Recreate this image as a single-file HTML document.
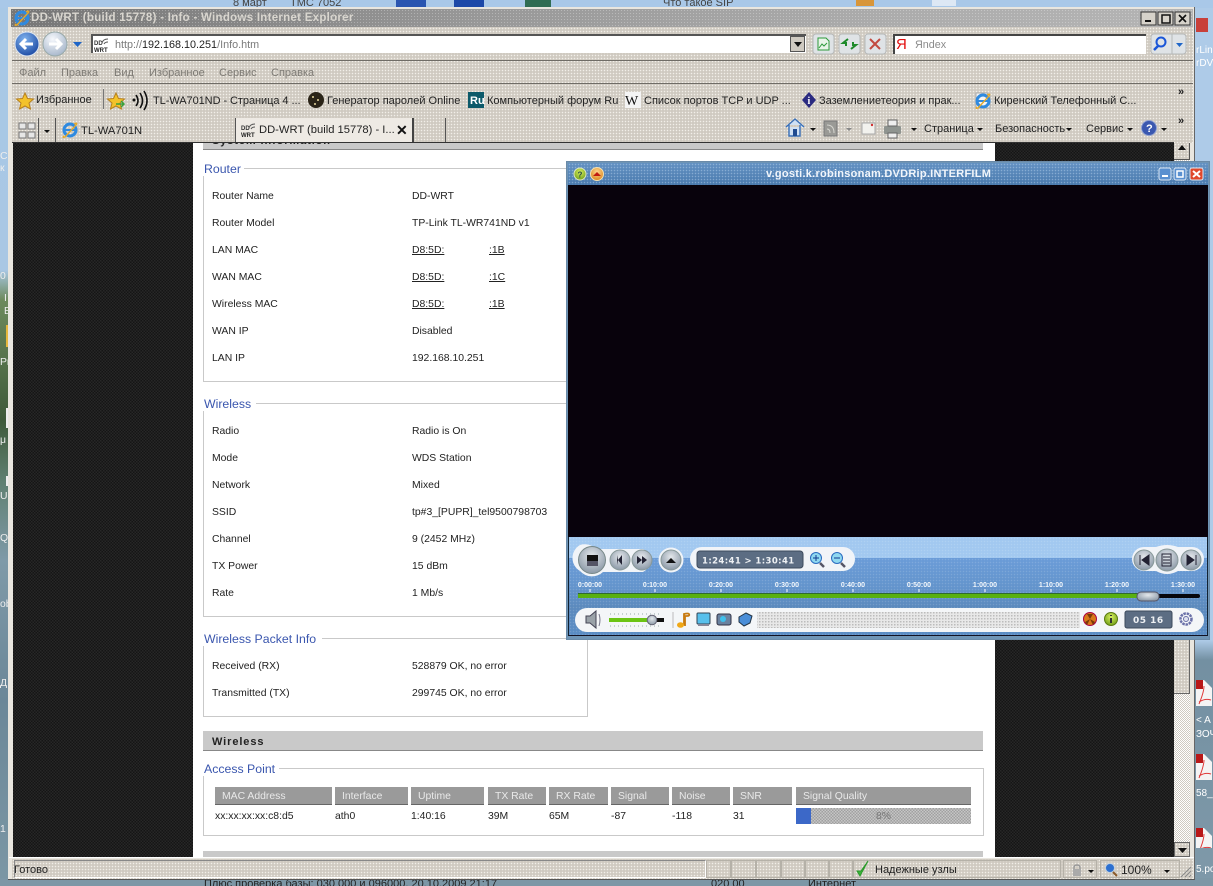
<!DOCTYPE html>
<html><head><meta charset="utf-8"><title>DD-WRT</title>
<style>
html,body{margin:0;padding:0;width:1213px;height:886px;overflow:hidden;background:#7f9bb0}
body{position:relative;font-family:"Liberation Sans","Noto Sans CJK SC",sans-serif;font-size:10.4px;color:#222}
div,span.a,svg.a{position:absolute}
.t{position:absolute;white-space:nowrap;line-height:14px}
.ch{background:radial-gradient(#f1efe9 .6px,transparent .9px) 0 0/3px 3px,#cfcac1}
.bk{background:repeating-conic-gradient(#151515 0 25%,#272727 0 50%) 0 0/3px 3px}
.m{font-size:11px;color:#222}
.g{font-size:11px;color:#7d7a74}
.l{color:#3a56ae;font-size:12.3px}
.ln{background:#c9c9c9}
.h{background:#9a9a9a;border-bottom:1px solid #666;color:#e9e9e9;height:18px;top:787px;line-height:19px;padding-left:7px;box-sizing:border-box;font-size:10.4px;white-space:nowrap}
.c{top:810px}
u{text-decoration:underline}
.o{left:0;top:2px;width:0;height:0}
.pn{top:860px;height:18px;border:1px solid #b5b1a8;box-sizing:border-box}
</style></head><body>

<!-- desktop -->
<div style="left:0;top:0;width:1213px;height:886px;background:linear-gradient(180deg,#a8c8e6 0,#a9c7e4 270px,#6d8a5c 300px,#3f5a3a 420px,#5f7f70 480px,#7f9aa8 560px,#6b8798 700px,#7c97a5 886px)"></div>
<div style="left:1195px;top:0;width:18px;height:886px;background:linear-gradient(180deg,#aecbe8 0,#aecbe8 640px,#7390a2 660px,#7f99a9 886px)"></div>
<div style="left:0;top:0;width:1213px;height:8px;background:#a9c8e8"></div>
<div style="left:0;top:878px;width:1213px;height:8px;background:#7d97a6"></div>
<div class="t" style="left:233px;top:-4px;color:#444;font-size:11px">8 март</div>
<div class="t" style="left:290px;top:-4px;color:#444;font-size:11px">ТМС 7052</div>
<div class="t" style="left:663px;top:-4px;color:#444;font-size:11px">Что такое SIP</div>
<div style="left:396px;top:0;width:30px;height:7px;background:#2a55b0"></div>
<div style="left:454px;top:0;width:30px;height:7px;background:#1c48a8"></div>
<div style="left:525px;top:0;width:26px;height:7px;background:#2f6c52"></div>
<div style="left:856px;top:0;width:18px;height:6px;background:#d8963a"></div>
<div style="left:932px;top:0;width:24px;height:6px;background:#dde8f4"></div>
<div class="t" style="left:0;top:150px;color:#eee">С</div>
<div class="t" style="left:0;top:162px;color:#eee">к</div>
<div class="t" style="left:0;top:270px;color:#eee">0</div>
<div class="t" style="left:4px;top:292px;color:#eee">I</div>
<div class="t" style="left:4px;top:305px;color:#eee">E</div>
<div class="t" style="left:0;top:356px;color:#eee">Pr</div>
<div class="t" style="left:0;top:434px;color:#eee">μ</div>
<div class="t" style="left:0;top:490px;color:#eee">U</div>
<div class="t" style="left:0;top:532px;color:#eee">QI</div>
<div class="t" style="left:0;top:598px;color:#eee">ob</div>
<div class="t" style="left:0;top:677px;color:#eee">Д</div>
<div class="t" style="left:0;top:823px;color:#eee">1</div>
<div style="left:6px;top:325px;width:3px;height:22px;background:#e6b83e"></div>
<div style="left:6px;top:408px;width:3px;height:20px;background:#eee"></div>
<div style="left:6px;top:476px;width:3px;height:10px;background:#eee"></div>
<div class="t" style="left:1196px;top:44px;color:#fff;font-size:10px">rLin</div>
<div class="t" style="left:1196px;top:57px;color:#fff;font-size:10px">rDV</div>
<div style="left:1196px;top:18px;width:12px;height:14px;background:#c8403a"></div>
<div class="t" style="left:1196px;top:714px;color:#fff;font-size:10px">&lt; A</div>
<div class="t" style="left:1196px;top:728px;color:#fff;font-size:10px">ЗОЧН</div>
<div class="t" style="left:1196px;top:787px;color:#fff;font-size:10px">58_</div>
<div class="t" style="left:1196px;top:863px;color:#fff;font-size:10px">5.ро</div>
<svg class="a" style="left:1196px;top:678px" width="17" height="170"><g id="p"><path d="M0 2h8l8 8v18H0z" fill="#f4f4f4"/><rect y="2" width="7" height="9" fill="#b81818"/><path d="M3 26Q8 14 8 8M3 24q6-4 12-2" stroke="#e03a3a" fill="none"/></g><use href="#p" y="74"/><use href="#p" y="148"/></svg>
<div style="left:0;top:880px;width:1213px;height:6px;overflow:hidden"><div class="t" style="left:204px;top:-3px;color:#222;font-size:11px">Плюс проверка базы: 030 000 и 096000, 20.10.2009 21:17</div><div class="t" style="left:711px;top:-3px;color:#222;font-size:11px">020 00</div><div class="t" style="left:808px;top:-3px;color:#222;font-size:11px">Интернет</div></div>

<!-- IE window -->
<div style="left:8px;top:7px;width:1187px;height:873px;background:#e9e6df;border-right:1px solid #666;border-bottom:1px solid #555;box-sizing:border-box"></div>
<div style="left:11px;top:9px;width:1182px;height:18px;background:radial-gradient(rgba(255,255,255,.28) .5px,transparent .8px) 0 0/3px 3px,linear-gradient(90deg,#767676,#989898 40%,#acacac 75%,#b4b4b4)"></div>
<div class="t" style="left:31px;top:11px;color:#d9d6cf;font-weight:bold;font-size:11.5px;letter-spacing:.28px">DD-WRT (build 15778) - Info - Windows Internet Explorer</div>

<div class="ch" style="left:12px;top:27px;width:1181px;height:116px"></div>
<div style="left:12px;top:60px;width:1181px;height:1px;background:#6f6c66"></div>
<div style="left:12px;top:83px;width:1181px;height:1px;background:#6f6c66"></div>
<div style="left:91px;top:34px;width:715px;height:19px;background:#fff;border-left:2px solid #555;border-top:2px solid #555;box-sizing:border-box"></div>
<div style="left:790px;top:36px;width:15px;height:16px;background:#cfcac1;border:1px solid #555;box-sizing:border-box"></div>
<div class="t" style="left:115px;top:38px;font-size:10.8px;color:#7a7a7a">http://<span style="color:#222">192.168.10.251</span>/Info.htm</div>
<div style="left:893px;top:34px;width:253px;height:20px;background:#fff;border-left:2px solid #444;border-top:2px solid #444;box-sizing:border-box"></div>
<div class="t" style="left:915px;top:38px;font-size:10.8px;color:#8a8a8a">Яndex</div>
<div class="t" style="left:896px;top:36px;font-size:15px;line-height:18px;color:#e21010">Я</div>

<div class="t g" style="left:19px;top:66px">Файл</div>
<div class="t g" style="left:61px;top:66px">Правка</div>
<div class="t g" style="left:114px;top:66px">Вид</div>
<div class="t g" style="left:149px;top:66px">Избранное</div>
<div class="t g" style="left:219px;top:66px">Сервис</div>
<div class="t g" style="left:271px;top:66px">Справка</div>

<div class="t m" style="left:36px;top:93px">Избранное</div>
<div style="left:103px;top:89px;width:1px;height:20px;background:#777"></div>
<div class="t m" style="left:153px;top:94px;letter-spacing:-.06px">TL-WA701ND - Страница 4 ...</div>
<div class="t m" style="left:327px;top:94px">Генератор паролей Online</div>
<div class="t m" style="left:487px;top:94px">Компьютерный форум Ru</div>
<div class="t m" style="left:644px;top:94px">Список портов TCP и UDP ...</div>
<div class="t m" style="left:819px;top:94px">Заземлениетеория и прак...</div>
<div class="t m" style="left:994px;top:94px">Киренский Телефонный С...</div>
<div class="t m" style="left:1178px;top:85px;font-weight:bold">»</div>
<div class="t m" style="left:1178px;top:114px;font-weight:bold">»</div>

<!-- tabs -->
<div style="left:38px;top:118px;width:1px;height:25px;background:#555"></div>
<div style="left:55px;top:118px;width:1px;height:25px;background:#555"></div>
<div style="left:235px;top:118px;width:179px;height:25px;background:#eeeae4;border-left:1px solid #555;border-right:2px solid #444;box-sizing:border-box"></div>
<div style="left:445px;top:118px;width:1px;height:25px;background:#555"></div>
<div class="t m" style="left:81px;top:124px;font-size:11.2px">TL-WA701N</div>
<div class="t m" style="left:259px;top:123px;font-size:11.2px">DD-WRT (build 15778) - I...</div>
<div class="t" style="left:396px;top:123px;font-weight:bold;font-size:14px;color:#111">✕</div>
<div class="t m" style="left:924px;top:122px">Страница</div><div class="t m" style="left:995px;top:122px">Безопасность</div><div class="t m" style="left:1086px;top:122px">Сервис</div>

<!-- content -->
<div style="left:12px;top:142px;width:1162px;height:1px;background:#333"></div>
<div class="bk" style="left:13px;top:143px;width:1161px;height:715px"></div>
<div style="left:193px;top:143px;width:802px;height:715px;background:#fff"></div>
<div style="left:203px;top:143px;width:780px;height:7px;background:#c9c9c9;border-bottom:1px solid #888;box-sizing:border-box;overflow:hidden"><div class="t" style="left:9px;top:-9px;font-weight:bold;font-size:11px;letter-spacing:.9px;color:#222">System Information</div></div>

<!-- scrollbar -->
<div style="left:1174px;top:143px;width:20px;height:715px;background:#e9e6df"></div>
<div style="left:1174px;top:160px;width:16px;height:682px;background:repeating-conic-gradient(#fff 0 25%,#cfcac1 0 50%) 0 0/2px 2px"></div>
<div class="ch" style="left:1174px;top:143px;width:16px;height:17px;border-right:1px solid #555;border-bottom:1px solid #555;box-sizing:border-box"></div>
<div class="ch" style="left:1174px;top:640px;width:16px;height:54px;border-right:1px solid #666;border-bottom:1px solid #666;box-sizing:border-box"></div>
<div class="ch" style="left:1174px;top:842px;width:16px;height:15px;border:1px solid #666;box-sizing:border-box"></div>

<!-- status -->
<div style="left:9px;top:857px;width:1185px;height:1px;background:#fff"></div>
<div class="ch" style="left:12px;top:859px;width:1181px;height:20px"></div>
<div style="left:14px;top:860px;width:692px;height:18px;border:1px solid #888;border-right-color:#fff;border-bottom-color:#fff;box-sizing:border-box"></div>
<div class="pn" style="left:706px;width:25px"></div>
<div class="pn" style="left:731px;width:25px"></div>
<div class="pn" style="left:756px;width:25px"></div>
<div class="pn" style="left:781px;width:24px"></div>
<div class="pn" style="left:805px;width:24px"></div>
<div class="pn" style="left:829px;width:24px"></div>
<div class="pn" style="left:853px;width:208px"></div>
<div class="pn" style="left:1063px;width:34px"></div>
<div class="pn" style="left:1100px;width:80px"></div>
<div class="t m" style="left:14px;top:863px;font-size:11px">Готово</div>
<div class="t m" style="left:875px;top:863px;font-size:11px">Надежные узлы</div>
<div class="t m" style="left:1121px;top:863px;font-size:12px">100%</div>

<!-- page text -->
<div class="ln" style="left:244px;top:168px;width:344px;height:1px"></div><div class="ln" style="left:203px;top:176px;width:1px;height:206px"></div><div class="ln" style="left:203px;top:381px;width:385px;height:1px"></div><div class="ln" style="left:587px;top:168px;width:1px;height:214px"></div>
<div class="t l" style="left:204px;top:162px">Router</div>
<div class="ln" style="left:256px;top:403px;width:332px;height:1px"></div><div class="ln" style="left:203px;top:411px;width:1px;height:206px"></div><div class="ln" style="left:203px;top:616px;width:385px;height:1px"></div>
<div class="t l" style="left:204px;top:397px">Wireless</div>
<div class="ln" style="left:322px;top:638px;width:266px;height:1px"></div><div class="ln" style="left:203px;top:646px;width:1px;height:71px"></div><div class="ln" style="left:203px;top:716px;width:385px;height:1px"></div><div class="ln" style="left:587px;top:638px;width:1px;height:79px"></div>
<div class="t l" style="left:204px;top:632px">Wireless Packet Info</div>
<div class="o">
<div class="t" style="left:212px;top:186px;margin-top:2px">Router Name</div><div class="t" style="left:412px;top:188px">DD-WRT</div>
<div class="t" style="left:212px;top:215px">Router Model</div><div class="t" style="left:412px;top:215px">TP-Link TL-WR741ND v1</div>
<div class="t" style="left:212px;top:242px">LAN MAC</div><div class="t" style="left:412px;top:242px"><u>D8:5D:</u></div><div class="t" style="left:489px;top:242px"><u>:1B</u></div>
<div class="t" style="left:212px;top:269px">WAN MAC</div><div class="t" style="left:412px;top:269px"><u>D8:5D:</u></div><div class="t" style="left:489px;top:269px"><u>:1C</u></div>
<div class="t" style="left:212px;top:296px">Wireless MAC</div><div class="t" style="left:412px;top:296px"><u>D8:5D:</u></div><div class="t" style="left:489px;top:296px"><u>:1B</u></div>
<div class="t" style="left:212px;top:323px">WAN IP</div><div class="t" style="left:412px;top:323px">Disabled</div>
<div class="t" style="left:212px;top:350px">LAN IP</div><div class="t" style="left:412px;top:350px">192.168.10.251</div>
<div class="t" style="left:212px;top:423px">Radio</div><div class="t" style="left:412px;top:423px">Radio is On</div>
<div class="t" style="left:212px;top:450px">Mode</div><div class="t" style="left:412px;top:450px">WDS Station</div>
<div class="t" style="left:212px;top:477px">Network</div><div class="t" style="left:412px;top:477px">Mixed</div>
<div class="t" style="left:212px;top:504px">SSID</div><div class="t" style="left:412px;top:504px">tp#3_[PUPR]_tel9500798703</div>
<div class="t" style="left:212px;top:531px">Channel</div><div class="t" style="left:412px;top:531px">9 (2452 MHz)</div>
<div class="t" style="left:212px;top:558px">TX Power</div><div class="t" style="left:412px;top:558px">15 dBm</div>
<div class="t" style="left:212px;top:585px">Rate</div><div class="t" style="left:412px;top:585px">1 Mb/s</div>
<div class="t" style="left:212px;top:658px">Received (RX)</div><div class="t" style="left:412px;top:658px">528879 OK, no error</div>
<div class="t" style="left:212px;top:685px">Transmitted (TX)</div><div class="t" style="left:412px;top:685px">299745 OK, no error</div>
</div>

<div style="left:203px;top:731px;width:780px;height:20px;background:#c9c9c9;border-bottom:1px solid #888;box-sizing:border-box"></div>
<div class="t" style="left:212px;top:735px;font-weight:bold;font-size:11px;letter-spacing:.9px;color:#222">Wireless</div>
<div class="ln" style="left:279px;top:768px;width:705px;height:1px"></div><div class="ln" style="left:203px;top:776px;width:1px;height:60px"></div><div class="ln" style="left:203px;top:835px;width:781px;height:1px"></div><div class="ln" style="left:983px;top:768px;width:1px;height:68px"></div>
<div class="t l" style="left:204px;top:762px">Access Point</div>
<div class="h" style="left:215px;width:117px">MAC Address</div>
<div class="h" style="left:335px;width:73px">Interface</div>
<div class="h" style="left:411px;width:73px">Uptime</div>
<div class="h" style="left:488px;width:58px">TX Rate</div>
<div class="h" style="left:549px;width:59px">RX Rate</div>
<div class="h" style="left:611px;width:58px">Signal</div>
<div class="h" style="left:672px;width:58px">Noise</div>
<div class="h" style="left:733px;width:59px">SNR</div>
<div class="h" style="left:796px;width:175px">Signal Quality</div>
<div class="t c" style="left:215px">xx:xx:xx:xx:c8:d5</div><div class="t c" style="left:335px">ath0</div><div class="t c" style="left:411px">1:40:16</div><div class="t c" style="left:488px">39M</div><div class="t c" style="left:549px">65M</div><div class="t c" style="left:611px">-87</div><div class="t c" style="left:672px">-118</div><div class="t c" style="left:733px">31</div>
<div style="left:796px;top:808px;width:175px;height:16px;background:repeating-conic-gradient(#a0a0a0 0 25%,#c6c6c6 0 50%) 0 0/3px 3px"></div>
<div style="left:796px;top:808px;width:15px;height:16px;background:#3c68c8"></div>
<div class="t" style="left:876px;top:810px;color:#777">8%</div>
<div style="left:203px;top:851px;width:780px;height:6px;background:#c9c9c9"></div>

<!-- IE icons -->
<svg class="a" style="left:0;top:0" width="1213" height="886" viewBox="0 0 1213 886">
<defs>
<radialGradient id="b1" cx=".4" cy=".3" r=".8"><stop offset="0" stop-color="#7fb2ee"/><stop offset="1" stop-color="#12409c"/></radialGradient>
<radialGradient id="s1" cx=".4" cy=".3" r=".8"><stop offset="0" stop-color="#f6f8fc"/><stop offset="1" stop-color="#9fb0c6"/></radialGradient>
<g id="ie"><circle cx="8" cy="8" r="6" fill="none" stroke="#2f8ae0" stroke-width="3"/><path d="M3 8h10" stroke="#2f8ae0" stroke-width="2"/><path d="M2 14Q0 16 3 15L14 3q2-3-2-1" fill="none" stroke="#e4a92a" stroke-width="1.400"/></g>
<g id="dd"><text x="0" y="7" font-size="6" font-weight="bold" font-family="Liberation Sans" fill="#333">DD</text><text x="0" y="14" font-size="6" font-weight="bold" font-family="Liberation Sans" fill="#222">WRT</text><path d="M8 5q1-4 6-4M10 6q1-2 4-2" stroke="#555" fill="none"/></g>
<g id="btn"><rect width="21" height="20" rx="3" fill="#dfe3e6" stroke="#b6b8b8"/></g>
</defs>
<use href="#ie" x="14" y="10"/>
<circle cx="27" cy="44" r="12" fill="url(#b1)" stroke="#dbe4f0"/><path d="M33 44H22m4-5l-5 5 5 5" stroke="#fff" stroke-width="3" fill="none"/>
<circle cx="55" cy="44" r="12" fill="url(#s1)" stroke="#9aa"/><path d="M49 44h11m-4-5l5 5-5 5" stroke="#fff" stroke-width="3" fill="none"/>
<path d="M73 42h9l-4.500 5z" fill="#1f66c8"/>
<use href="#dd" x="94" y="38"/>
<path d="M794 42h8l-4 5z" fill="#111"/>
<use href="#btn" x="813" y="34"/><path d="M818 38h8l3 3v9h-11zM819 48l3-4 2 2 3-3" fill="#e8f4e8" stroke="#2c9a3a"/>
<use href="#btn" x="839" y="34"/><path d="M848 39l-5 4h3v3M851 49l5-4h-3v-3" stroke="#1d8a2a" stroke-width="2" fill="none"/>
<use href="#btn" x="865" y="34"/><path d="M870 39l10 10m0-10l-10 10" stroke="#c24a40" stroke-width="2"/>
<rect x="1151" y="34" width="35" height="20" rx="3" fill="#dfe3e6" stroke="#b6b8b8"/><circle cx="1161" cy="42" r="4.500" fill="none" stroke="#1a56d8" stroke-width="2"/><path d="M1158 46l-4 4" stroke="#1a56d8" stroke-width="2.500"/><path d="M1176 43h7l-3.500 4z" fill="#1f66c8"/><path d="M1172 34v20" stroke="#b6b8b8"/>
<!-- title buttons -->
<g fill="#d6d2ca" stroke="#333"><rect x="1141" y="12" width="15" height="13"/><rect x="1158" y="12" width="15" height="13"/><rect x="1175" y="12" width="15" height="13"/></g>
<path d="M1145 21h6" stroke="#111" stroke-width="2"/><rect x="1162" y="15" width="8" height="8" fill="none" stroke="#111" stroke-width="1.500"/><path d="M1179 15l7 7m0-7l-7 7" stroke="#111" stroke-width="1.600"/>
<!-- fav -->
<path id="st" d="M25 93l2.500 5.500 6 .5-4.500 4 1.500 6-5.500-3-5.500 3 1.500-6-4.500-4 6-.5z" fill="#f3c22b" stroke="#b8801c"/>
<use href="#st" x="91" y="0"/><path d="M116 104h8m-3-3l3 3-3 3" stroke="#3aa03a" stroke-width="1.500" fill="none"/>
<path d="M136 95q4 6 0 11M140 93q5 8 0 15M144 91q6 10 0 19" stroke="#111" stroke-width="1.600" fill="none"/><circle cx="134" cy="100" r="1.500" fill="#111"/>
<circle cx="316" cy="100" r="8" fill="#2a2418"/><circle cx="313" cy="97" r="1" fill="#e8d8a0"/><circle cx="318" cy="100" r="1" fill="#e8d8a0"/><circle cx="315" cy="104" r="1" fill="#e8d8a0"/>
<rect x="468" y="92" width="16" height="16" fill="#0d5a6a"/><text x="470" y="104" font-size="11" font-weight="bold" font-family="Liberation Sans" fill="#fff">Ru</text>
<rect x="625" y="92" width="16" height="16" fill="#f4f4f4"/><text x="625" y="105" font-size="14" font-family="Liberation Serif" fill="#111">W</text>
<path d="M809 92l7 8-7 8-7-8z" fill="#2a2a80"/><text x="807.500" y="104" font-size="10" font-weight="bold" font-family="Liberation Serif" fill="#fff">i</text>
<path d="M976 93h11l3 3v12h-14z" fill="#f4f4f4" stroke="#aaa"/><use href="#ie" x="975" y="93"/>
<!-- tab icons -->
<g fill="#e6e6e6" stroke="#777"><rect x="19" y="123" width="7" height="6"/><rect x="28" y="123" width="7" height="6"/><rect x="19" y="132" width="7" height="6"/><rect x="28" y="132" width="7" height="6"/></g>
<path d="M44 130h6l-3 3z" fill="#111"/>
<use href="#ie" x="62" y="122"/><use href="#dd" x="241" y="123"/>
<!-- cmd bar -->
<path d="M786 127l9-8 9 8M789 125v11h11v-11" fill="#cfe0f4" stroke="#3a70b8" stroke-width="1.400"/><rect x="793" y="129" width="4" height="7" fill="#1f4a90"/>
<path d="M810 128h6l-3 3zM977 128h6l-3 3zM1066 128h6l-3 3zM1127 128h6l-3 3zM1161 128h6l-3 3zM911 128h6l-3 3z" fill="#111"/>
<path d="M846 128h6l-3 3z" fill="#888"/>
<rect x="824" y="121" width="13" height="15" fill="#9a9a96" stroke="#777"/><path d="M827 125q7 0 7 8M827 129q3 0 3 4" stroke="#d6d6d0" fill="none"/>
<rect x="862" y="123" width="13" height="11" fill="#f2f2ee" stroke="#aaa"/><circle cx="872" cy="125" r="1.200" fill="#d03030"/>
<rect x="884" y="126" width="17" height="8" rx="1" fill="#8f9490"/><rect x="888" y="120" width="9" height="6" fill="#eee" stroke="#666"/><rect x="888" y="133" width="9" height="5" fill="#eee" stroke="#666"/>
<circle cx="1149" cy="128" r="7.500" fill="#3a58b0" stroke="#8fa0d0"/><text x="1146" y="132" font-size="11" font-weight="bold" font-family="Liberation Sans" fill="#fff">?</text>
<path d="M1178 150h8l-4-5zM1178 848h9l-4.500 5z" fill="#111"/>
<!-- status -->
<path d="M857 871l3 5 8-15-7 10z" fill="#3cb43c" stroke="#2a9a2a"/>
<path d="M1074 873v-5q0-3 3-3t3 3v5" fill="none" stroke="#999" stroke-width="1.400"/><rect x="1073" y="869" width="8" height="7" fill="#aaa"/>
<path d="M1088 870h6l-3 3zM1164 870h6l-3 3z" fill="#111"/>
<circle cx="1110" cy="868" r="4.500" fill="#2d70d0" stroke="#bcd"/><path d="M1113 872l4 4" stroke="#8a5a2a" stroke-width="2"/>
<path d="M1181 877l10-10M1185 877l6-6M1189 877l2-2" stroke="#888"/>
</svg>

<!-- player -->
<div style="left:566px;top:161px;width:644px;height:479px;background:#6f95b6;border:1px solid #6a8aa8;box-sizing:border-box"></div>
<div style="left:568px;top:163px;width:640px;height:22px;background:radial-gradient(rgba(190,215,240,.45) .6px,transparent .9px) 0 0/3px 3px,linear-gradient(180deg,#6391c2,#4a7aae)"></div>
<div style="left:568px;top:185px;width:640px;height:352px;background:#08020c"></div>
<div style="left:568px;top:537px;width:640px;height:99px;background:radial-gradient(rgba(255,255,255,.14) .6px,transparent .9px) 0 0/3px 3px,linear-gradient(180deg,#a2c8f0 0,#a2c8f0 21px,#6b9cd8 21px,#6394cc 50px,#5c8abd 70px,#5a8cc4 100%);border-left:1px solid #123;border-right:1px solid #123;border-bottom:1px solid #112;box-sizing:border-box"></div>
<div class="t" style="left:766px;top:167px;color:#f2f6fb;font-weight:bold;font-size:11px;letter-spacing:.26px">v.gosti.k.robinsonam.DVDRip.INTERFILM</div>

<svg class="a" style="left:0;top:0" width="1213" height="886" viewBox="0 0 1213 886">
<defs>
<radialGradient id="gb" cx=".5" cy=".35" r=".75"><stop offset="0" stop-color="#e4e8ec"/><stop offset="1" stop-color="#7d8c9c"/></radialGradient>
<radialGradient id="gg" cx=".5" cy=".35" r=".7"><stop offset="0" stop-color="#d8f060"/><stop offset="1" stop-color="#6a9a14"/></radialGradient>
<radialGradient id="go" cx=".5" cy=".35" r=".7"><stop offset="0" stop-color="#ffd890"/><stop offset="1" stop-color="#d88014"/></radialGradient>
<pattern id="dg" width="3" height="3" patternUnits="userSpaceOnUse"><rect width="3" height="3" fill="#e8e8e8"/><rect width="1.500" height="1.500" fill="#bcbcbc"/></pattern>
</defs>
<circle cx="580" cy="174" r="6" fill="url(#gg)" stroke="#dfe8c0"/><text x="577.500" y="177.500" font-size="8" font-weight="bold" font-family="Liberation Sans" fill="#244">?</text>
<circle cx="597" cy="174" r="6.500" fill="url(#go)" stroke="#f4e0b0"/><path d="M593 176h8l-4-4z" fill="#c01c10"/>
<g stroke="#dbe6f2"><rect x="1159" y="168" width="12" height="12" rx="2" fill="#5a90d0"/><rect x="1174" y="168" width="12" height="12" rx="2" fill="#5a90d0"/><rect x="1190" y="168" width="13" height="12" rx="2" fill="#e0482c"/></g>
<path d="M1162 176h6" stroke="#fff" stroke-width="2"/><rect x="1177" y="171" width="6" height="6" fill="none" stroke="#fff" stroke-width="1.500"/><path d="M1193 171l7 6m0-6l-7 6" stroke="#fff" stroke-width="2"/>

<!-- top controls -->
<path d="M580 545a16 16 0 0 1 16 4h47a13 13 0 0 1 0 23h-40a16 16 0 0 1-23-1 15 15 0 0 1 0-26z" fill="#f1f4f8"/>
<circle cx="592" cy="560" r="13.500" fill="url(#gb)" stroke="#788"/><rect x="587" y="555" width="11" height="6" fill="#111"/><rect x="587" y="561" width="11" height="5" fill="#556"/>
<circle cx="620" cy="560" r="10" fill="url(#gb)" stroke="#899"/><path d="M617 555v10l1-5 4 5v-10l-4 5z" fill="#223"/>
<circle cx="642" cy="560" r="10" fill="url(#gb)" stroke="#899"/><path d="M637 556l5 4-5 4zM642 556l5 4-5 4z" fill="#223"/>
<circle cx="671" cy="560" r="12.500" fill="#f1f4f8"/><circle cx="671" cy="560" r="10" fill="url(#gb)" stroke="#899"/><path d="M666 563h10l-5-5z" fill="#111"/>
<rect x="690" y="547" width="165" height="24" rx="12" fill="#f1f4f8"/>
<rect x="697" y="551" width="106" height="17" rx="3" fill="#5c6d83" stroke="#3c4a5c"/>
<text x="702" y="563.500" font-size="8.500" font-weight="bold" font-family="DejaVu Sans" letter-spacing=".4" fill="#eef1f4">1:24:41 &gt; 1:30:41</text>
<circle cx="816" cy="558" r="5.500" fill="#8fd8f0" stroke="#2a6cc0"/><path d="M813 558h6m-3-3v6" stroke="#123a90"/><path d="M820 563l4 4" stroke="#556" stroke-width="2.500"/>
<circle cx="837" cy="558" r="5.500" fill="#8fd8f0" stroke="#2a6cc0"/><path d="M834 558h6" stroke="#123a90"/><path d="M841 563l4 4" stroke="#556" stroke-width="2.500"/>
<path d="M1144 547h12q11-4 22 0h14a12 12 0 0 1 0 24h-14q-11 6-22 0h-12a12 12 0 0 1 0-24z" fill="#f1f4f8"/>
<circle cx="1144" cy="560" r="10" fill="url(#gb)" stroke="#899"/><path d="M1140 555v10M1149 555l-7 5 7 5z" stroke="#223" fill="#223"/>
<circle cx="1167" cy="560" r="11" fill="url(#gb)" stroke="#899"/><rect x="1162" y="554" width="9" height="12" fill="none" stroke="#223"/><path d="M1163 557h7M1163 560h7M1163 563h7" stroke="#223"/>
<circle cx="1191" cy="560" r="10" fill="url(#gb)" stroke="#899"/><path d="M1196 555v10M1187 555l7 5-7 5z" stroke="#223" fill="#223"/>

<!-- timeline -->
<g text-anchor="middle" font-size="7" font-weight="bold" font-family="Liberation Sans" fill="#f4f8fc">
<text x="590" y="587">0:00:00</text><text x="655" y="587">0:10:00</text><text x="721" y="587">0:20:00</text><text x="787" y="587">0:30:00</text><text x="853" y="587">0:40:00</text><text x="919" y="587">0:50:00</text><text x="985" y="587">1:00:00</text><text x="1051" y="587">1:10:00</text><text x="1117" y="587">1:20:00</text><text x="1183" y="587">1:30:00</text></g>
<path d="M590 589v3M655 589v3M721 589v3M787 589v3M853 589v3M919 589v3M985 589v3M1051 589v3M1117 589v3M1183 589v3" stroke="#fff"/>
<rect x="578" y="594" width="562" height="4" fill="#58b010"/><rect x="578" y="593" width="562" height="1" fill="#2f6a30"/>
<rect x="1156" y="594" width="44" height="4" rx="2" fill="#06060c"/>
<rect x="1137" y="592" width="22" height="9" rx="4" fill="url(#gb)" stroke="#556"/>

<!-- bottom -->
<rect x="575" y="608" width="629" height="24" rx="12" fill="#f4f6f8"/>
<rect x="757" y="612" width="323" height="16" fill="url(#dg)"/>
<path d="M586 616h4l6-5v17l-6-5h-4z" fill="#9aa2a8" stroke="#445"/>
<path d="M599 614q2 6 0 12" stroke="#778" fill="none"/>
<path d="M610 614h50M610 626h50" stroke="#9aa" stroke-dasharray="1 3"/>
<rect x="609" y="618" width="42" height="4" fill="#6cc414"/><rect x="652" y="618" width="12" height="4" fill="#111"/>
<circle cx="652" cy="620" r="4.800" fill="url(#gb)" stroke="#667"/>
<path d="M673 612v16" stroke="#bbb"/>
<path d="M684 625v-11q4-1 5 0 1 2-2 2l-2 0v10" stroke="#c87a10" stroke-width="1.800" fill="none"/><ellipse cx="680.500" cy="625" rx="3.500" ry="2.800" fill="#f0a818"/>
<rect x="697" y="613" width="13" height="11" rx="1" fill="#58c0ec" stroke="#345"/><rect x="698" y="624" width="11" height="2" fill="#889"/>
<rect x="717" y="614" width="14" height="11" rx="2" fill="#6a82a0" stroke="#334"/><circle cx="723" cy="619" r="3" fill="#40c0ec"/>
<path d="M739 617l7-4 6 3-2 7-6 3-5-4z" fill="#4a8ed8" stroke="#234"/>
<circle cx="1090" cy="619" r="6.500" fill="#d87818" stroke="#a04"/><path d="M1090 619l-3-5h6zM1090 619l-5 3 2 3zM1090 619l5 3-2 3z" fill="#7a3808"/>
<circle cx="1111" cy="619" r="6.500" fill="url(#gg)" stroke="#5a7a10"/><path d="M1111 615v1M1111 618v5" stroke="#223" stroke-width="1.800"/>
<rect x="1125" y="611" width="47" height="17" rx="2" fill="#5c6d83" stroke="#3c4a5c"/>
<text x="1133" y="623" font-size="9" font-weight="bold" font-family="DejaVu Sans" letter-spacing=".5" fill="#eef1f4">05 16</text>
<circle cx="1186" cy="619" r="5.500" fill="none" stroke="#6a70a8" stroke-width="2.500" stroke-dasharray="2.500 .8"/><circle cx="1186" cy="619" r="2.500" fill="#dfe2ee" stroke="#6a70a8"/>
</svg>
</body></html>
